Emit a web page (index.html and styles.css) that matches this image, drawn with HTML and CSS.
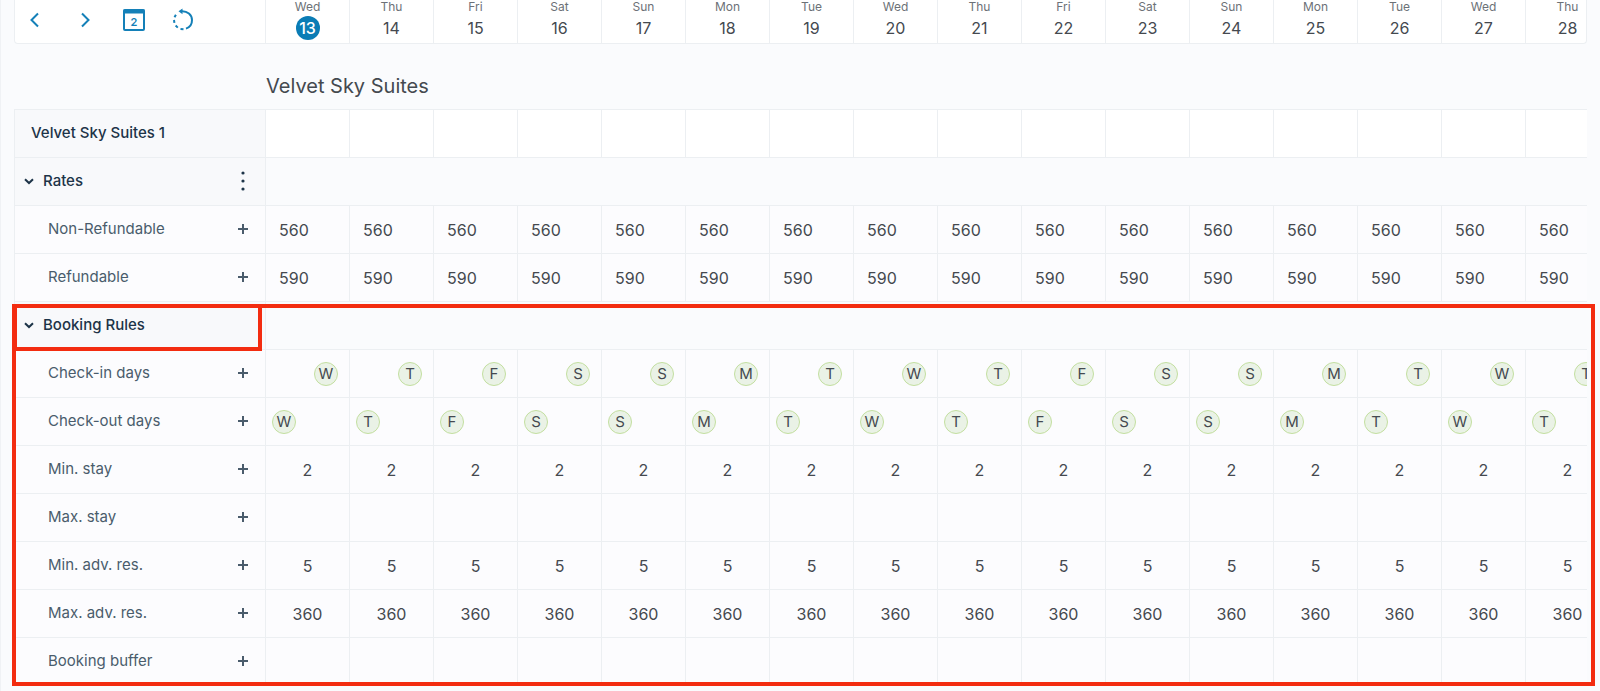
FILE: index.html
```html
<!DOCTYPE html>
<html lang="en">
<head>
<meta charset="utf-8">
<title>Calendar - Velvet Sky Suites</title>
<link rel="stylesheet" href="styles.css">
</head>
<body>
<main class="page">
  <header class="topbar">
    <nav class="toolbar" aria-label="Calendar navigation">
      <button class="tool" type="button" aria-label="Previous">
        <svg width="24" height="24" viewBox="0 0 24 24"><path d="M15 5.500 8.500 12 15 18.500"/></svg>
      </button>
      <button class="tool" type="button" aria-label="Next">
        <svg width="24" height="24" viewBox="0 0 24 24"><path d="M9 5.500 15.500 12 9 18.500"/></svg>
      </button>
      <button class="tool tool-date" type="button" aria-label="Today">
        <svg width="24" height="24" viewBox="0 0 24 24"><rect x="2" y="2" width="20" height="20" rx="1"/><path class="solid" d="M1.500 1.500h21v4h-21z"/></svg>
        <span class="tool-num">2</span>
      </button>
      <button class="tool" type="button" aria-label="Reset">
        <svg width="24" height="24" viewBox="0 0 24 24"><path d="M10 3.200C16.500 2.600 21 7 21 12A9 9 0 0 1 15 20.600"/><path class="solid" d="M11.500 .5v5.800L7.500 3.300z"/><path d="M12.500 21.200 9.500 20.900M6.800 19.600 4.600 17.500M3.400 14.800 3 12M3.500 9.200 4.900 6.700"/></svg>
      </button>
    </nav>
    <ol class="days" id="days"></ol>
  </header>
  <h1 class="title">Velvet Sky Suites</h1>
  <section class="calendar">
    <div class="scroller">
      <table class="grid">
        <colgroup id="cols"><col class="col-label"></colgroup>
        <tbody id="rows"></tbody>
      </table>
    </div>
    <div class="mark mark-section"></div>
    <div class="mark mark-heading"></div>
  </section>
</main>
<script src="calendar.js"></script>
</body>
</html>
```
FILE: styles.css
```css
* { box-sizing: border-box; }

body {
  margin: 0;
  background: #fafbfd;
  color: #44494f;
  font-family: Inter, "Liberation Sans", sans-serif;
  font-size: 16px;
  line-height: 20px;
}

button {
  padding: 0;
  border: 0;
  background: none;
  color: inherit;
  font: inherit;
  cursor: pointer;
}

svg {
  display: block;
  fill: none;
  stroke: currentColor;
  stroke-width: 2;
}

.page {
  padding: 0 13px 5px;
  border-left: 1px solid #f0f2f5;
  border-bottom: 1px solid #eceff2;
}

.topbar {
  display: flex;
  overflow: hidden;
  border: 1px solid #eceff2;
  border-top: 0;
  border-radius: 0 0 4px 4px;
  background: #fff;
}

.toolbar {
  display: flex;
  flex: 0 0 250px;
  align-items: center;
  gap: 25px;
  padding: 0 0 4px 8px;
  color: #1480b8;
}

.tool { position: relative; width: 24px; height: 24px; }
.tool:first-child { margin-right: 1px; }
.tool .solid { fill: currentColor; stroke: none; }

.tool-num {
  position: absolute;
  inset: 6px 0 0;
  font-size: 11px;
  font-weight: 600;
  line-height: 16px;
}

.days { display: flex; margin: 0; padding: 0; list-style: none; }

.day {
  display: flex;
  flex: 0 0 84px;
  flex-direction: column;
  align-items: center;
  height: 43px;
  border-left: 1px solid #eceff2;
}

.day-name { color: #6c7177; font-size: 12px; line-height: 14px; }

.day-num { width: 24px; height: 24px; margin-top: 2px; line-height: 24px; text-align: center; }

.day-num.today { border-radius: 50%; background: #0a7cb5; color: #fff; font-weight: 500; }

.title {
  margin: 28px 0 9px 252px;
  font-size: 20px;
  font-weight: 400;
  line-height: 28px;
}

.calendar { position: relative; }

.scroller { overflow: hidden; border-top: 1px solid #eceff2; border-left: 1px solid #eceff2; }

.grid { width: 1594px; table-layout: fixed; border-collapse: separate; border-spacing: 0; }

.col-label { width: 250px; }
.col-day { width: 84px; }

.grid th,
.grid td { height: 48px; padding: 0; border-bottom: 1px solid #eceff2; }

.grid tr:last-child > * { border-bottom: 0; }

.grid td { border-left: 1px solid #eceff2; background: #fcfcfe; text-align: center; }

.grid th { padding-bottom: 2px; background: #fcfcfe; color: #4a5c6c; font-size: 15px; font-weight: 400; text-align: left; }

.label { display: flex; align-items: center; padding: 0 10px 0 33px; }
.label-text { flex: 1; }

.grid .room th,
.grid .group th { background: #f8f9fb; color: #1d3448; font-weight: 500; }
.grid .room td { background: #fff; }
.grid .group td { background: #fafbfd; }

.room .label { padding-left: 16px; }
.group .label { padding-left: 8px; }

.toggle { display: flex; align-items: center; gap: 8px; }

.add { width: 24px; height: 24px; }
.more svg { fill: currentColor; stroke: none; }

.grid .rate td { padding-left: 13px; text-align: left; }

.grid .checkin td { padding: 0 0 0 48px; }
.grid .checkout td { padding: 0 0 0 6px; }

.chip {
  display: block;
  width: 24px;
  height: 24px;
  border: 1px solid #c3dfa0;
  border-radius: 50%;
  background: #eaf2e6;
  font-size: 15px;
  line-height: 22px;
  text-align: center;
}

.mark { position: absolute; border: 4px solid #f32c10; pointer-events: none; }
.mark-section { top: 195px; right: -8px; bottom: 0; left: -2px; }
.mark-heading { top: 195px; left: -1px; width: 249px; height: 47px; }
```
FILE: calendar.js
```js
const names = ["Wed", "Thu", "Fri", "Sat", "Sun", "Mon", "Tue"];
const days = Array.from({ length: 16 }, (_, i) => ({ name: names[i % 7], num: 13 + i }));

const plus = '<svg width="24" height="24" viewBox="0 0 24 24"><path d="M7 12h10M12 7v10"/></svg>';
const dots = '<svg width="24" height="24" viewBox="0 0 24 24"><circle cx="12" cy="4" r="1.600"/><circle cx="12" cy="12" r="1.600"/><circle cx="12" cy="20" r="1.600"/></svg>';
const chevron = '<svg width="12" height="12" viewBox="0 0 12 12"><path d="M2 4.200 6 8l4-3.800"/></svg>';

const rows = [
  { kind: "room", label: "Velvet Sky Suites 1" },
  { kind: "group", label: "Rates", menu: true },
  { kind: "rate", label: "Non-Refundable", value: 560 },
  { kind: "rate", label: "Refundable", value: 590 },
  { kind: "group", label: "Booking Rules" },
  { kind: "checkin", label: "Check-in days" },
  { kind: "checkout", label: "Check-out days" },
  { kind: "rule", label: "Min. stay", value: 2 },
  { kind: "rule", label: "Max. stay" },
  { kind: "rule", label: "Min. adv. res.", value: 5 },
  { kind: "rule", label: "Max. adv. res.", value: 360 },
  { kind: "rule", label: "Booking buffer" }
];

function labelCell(row) {
  if (row.kind === "room") {
    return `<div class="label">${row.label}</div>`;
  }
  if (row.kind === "group") {
    const menu = row.menu ? `<button class="add more" type="button" aria-label="More">${dots}</button>` : "";
    return `<div class="label"><span class="label-text"><button class="toggle" type="button" aria-expanded="true">${chevron}${row.label}</button></span>${menu}</div>`;
  }
  return `<div class="label"><span class="label-text">${row.label}</span><button class="add" type="button" aria-label="Add ${row.label}">${plus}</button></div>`;
}

function dayCells(row) {
  if (row.kind === "group") {
    return `<td colspan="${days.length}"></td>`;
  }
  return days.map((day) => {
    if (row.kind === "checkin" || row.kind === "checkout") {
      return `<td><span class="chip">${day.name[0]}</span></td>`;
    }
    return `<td>${row.value ?? ""}</td>`;
  }).join("");
}

document.getElementById("days").innerHTML = days.map((day, i) =>
  `<li class="day"><span class="day-name">${day.name}</span><span class="day-num${i === 0 ? " today" : ""}">${day.num}</span></li>`
).join("");

document.getElementById("cols").insertAdjacentHTML("beforeend", '<col class="col-day">'.repeat(days.length));

document.getElementById("rows").innerHTML = rows.map((row) =>
  `<tr class="${row.kind}"><th scope="row">${labelCell(row)}</th>${dayCells(row)}</tr>`
).join("");
```
